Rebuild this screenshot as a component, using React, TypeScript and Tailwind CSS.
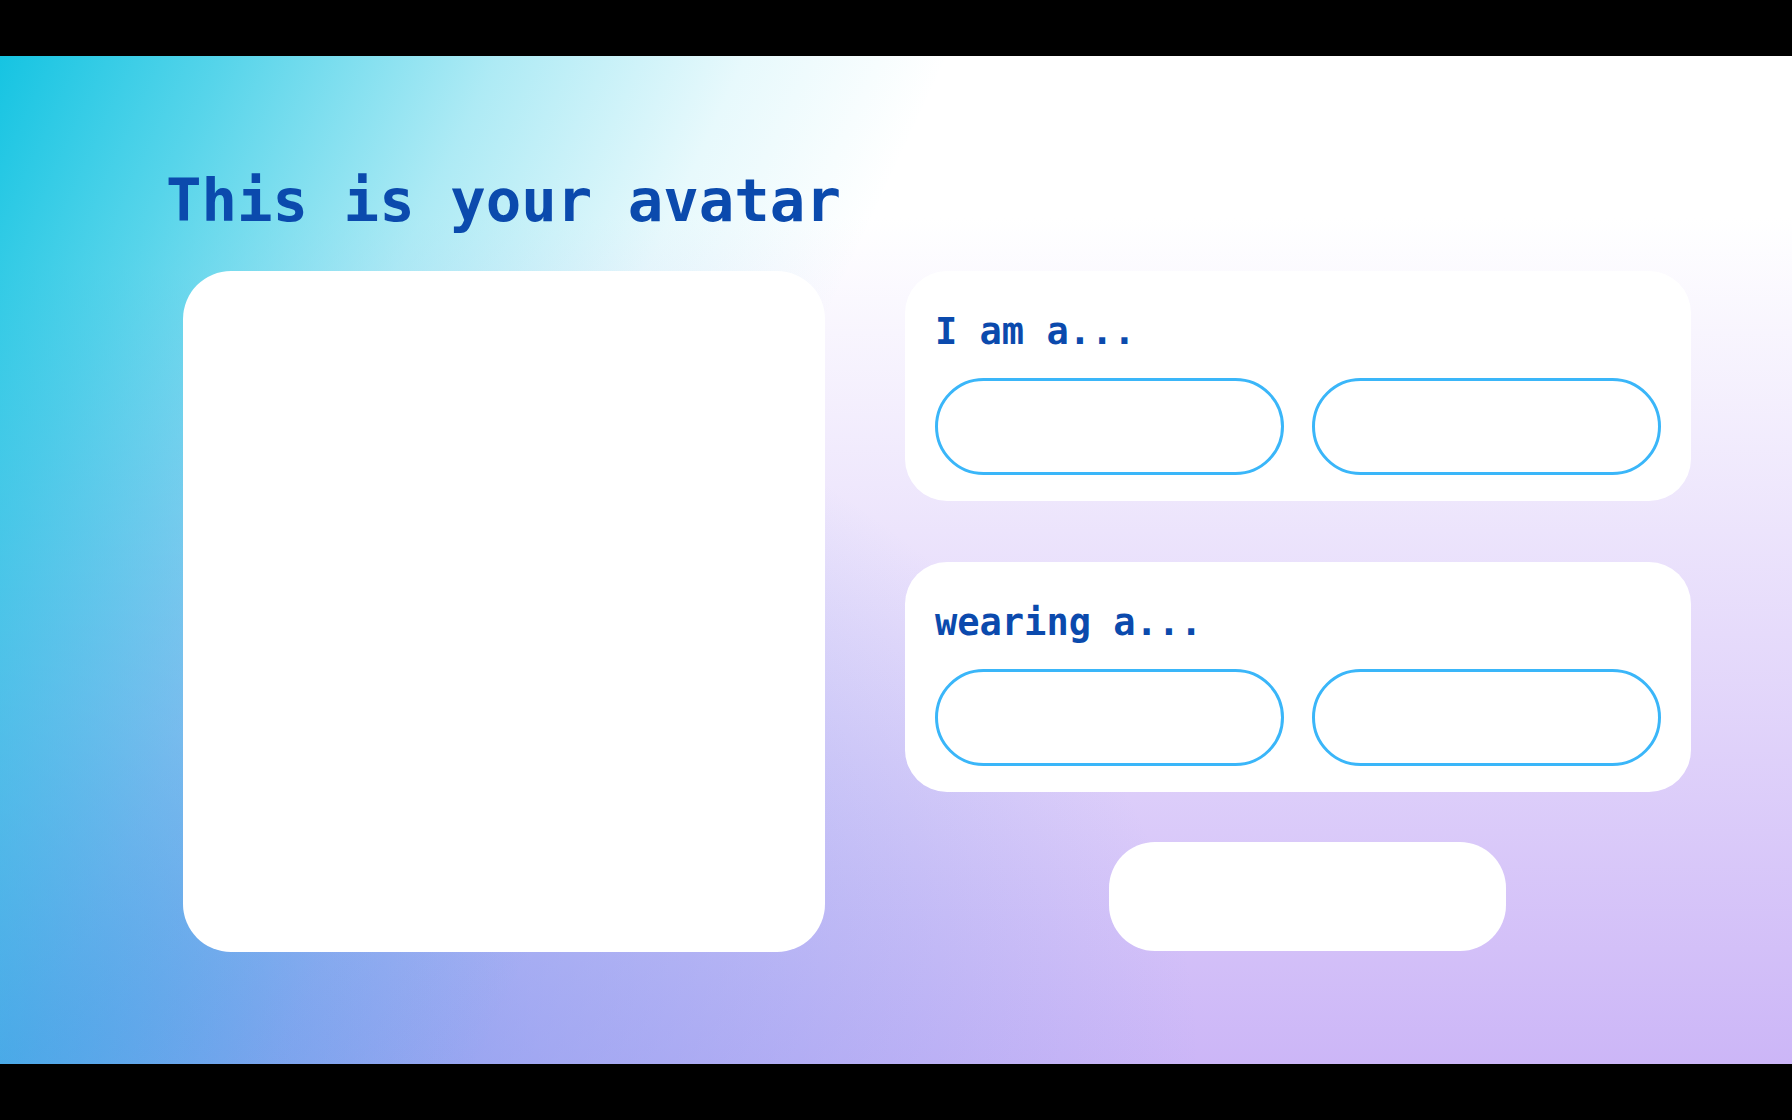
export default function App() {
  const choices = [
    { label: "I am a...", options: ["", ""] },
    { label: "wearing a...", options: ["", ""] },
  ]

  return (
    <div className="min-h-screen w-full bg-black font-['DejaVu_Sans_Mono',monospace]">
      <div className="h-[56px] bg-black" />

      <div className="h-[1008px] w-full bg-[linear-gradient(115deg,rgba(22,196,226,1)_0%,rgba(22,196,226,0.72)_10%,rgba(22,196,226,0.35)_22%,rgba(22,196,226,0.1)_33%,rgba(22,196,226,0)_42%),radial-gradient(1200px_800px_at_0%_100%,rgba(96,150,234,0.9)_0%,rgba(110,150,236,0.45)_45%,rgba(130,150,240,0)_100%),linear-gradient(to_bottom,#ffffff_16%,#ccb6f7_100%)]">
        <div className="pl-[166px] pt-[115px]">
          <h1 className="text-[59px] leading-[60px] font-bold text-[#0b4aad]">This is your avatar</h1>
        </div>

        <div className="mt-[40px] flex gap-[80px] pl-[183px]">
          {/* avatar preview */}
          <div className="h-[681px] w-[642px] rounded-[48px] bg-white" />

          <div className="flex w-[786px] flex-col">
            {choices.map((c, i) => (
              <div
                key={c.label}
                className={`rounded-[42px] bg-white px-[30px] pt-[42px] pb-[26px] ${i > 0 ? "mt-[61px]" : ""}`}
              >
                <p className="text-[37px] leading-[37px] font-bold text-[#0b4aad]">{c.label}</p>
                <div className="mt-[28px] grid grid-cols-2 gap-[28px]">
                  {c.options.map((o, j) => (
                    <button
                      key={j}
                      className="h-[97px] rounded-full border-[3px] border-[#3ab6f9] bg-white"
                    >
                      {o}
                    </button>
                  ))}
                </div>
              </div>
            ))}

            <div className="mt-[50px] flex justify-center pl-[19px]">
              <button className="h-[109px] w-[397px] rounded-[46px] bg-white" />
            </div>
          </div>
        </div>
      </div>

      <div className="h-[56px] bg-black" />
    </div>
  )
}
